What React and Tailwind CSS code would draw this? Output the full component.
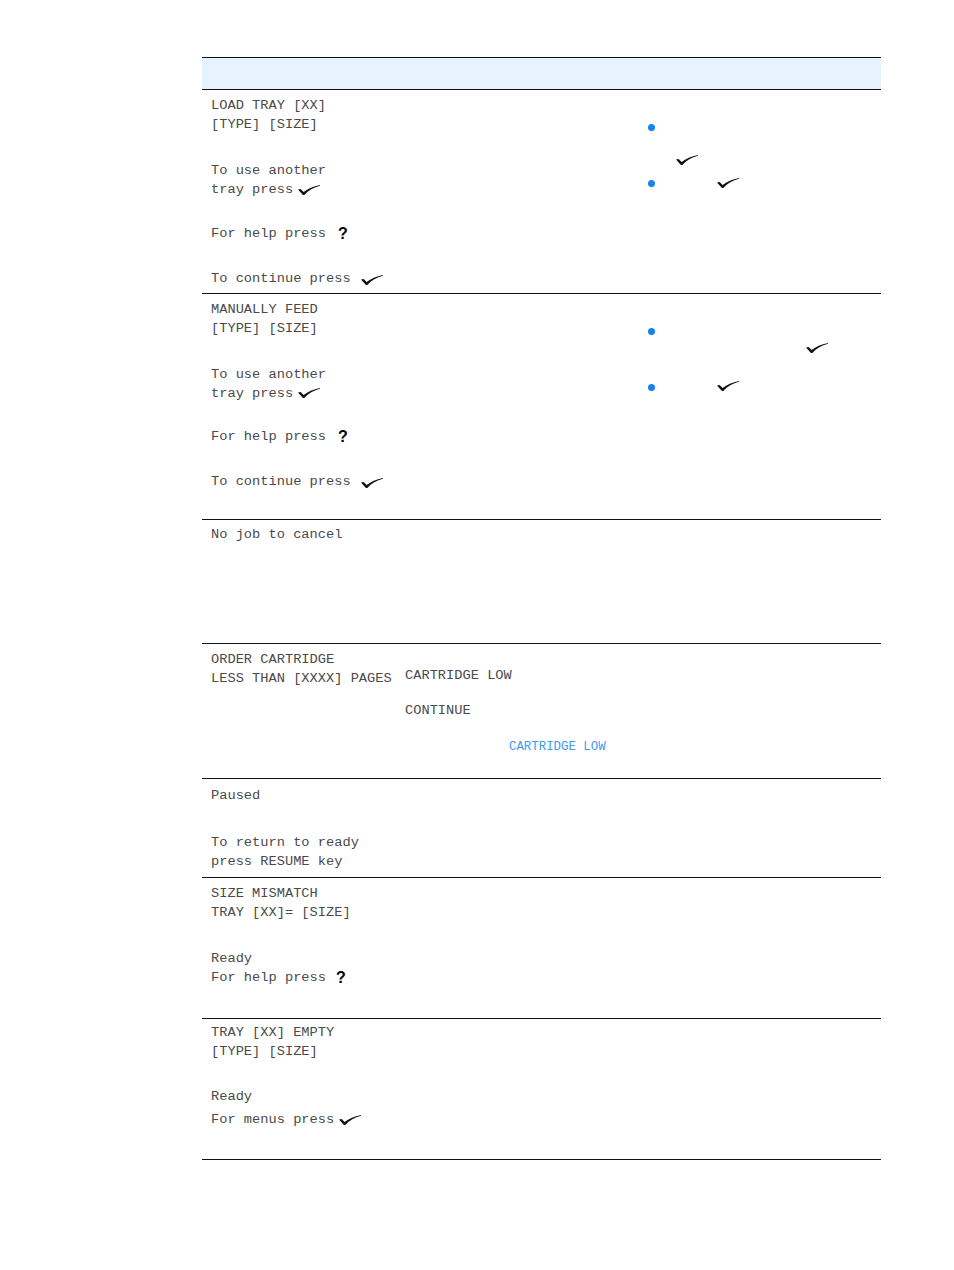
import React from 'react'

// Message table: panel text on the left, notes on the right
function Check({ className = '' }) {
  return (
    <svg viewBox="0 0 22 10" className={`w-[22px] h-[10px] shrink-0 ${className}`}>
      <path
        d="M0 4.6 L2.6 4 L5.6 6.9 C10 3.8 15 1.5 22 0 L22 0.8 C15.5 2.5 10.5 5.5 6.3 10 L4.9 10 Z"
        fill="#111"
      />
    </svg>
  )
}

function Help({ className = '' }) {
  return (
    <span className={`font-['Liberation_Sans',Arial,sans-serif] font-bold text-[16px] leading-none text-black ${className}`}>
      ?
    </span>
  )
}

function Line({ children, className = '' }) {
  return <div className={`flex items-center h-[19px] whitespace-pre ${className}`}>{children}</div>
}

function Bullet() {
  return <span className="block w-[7px] h-[7px] rounded-full bg-[#1683f5] shrink-0" />
}

function Row({ height, col1, col2, col3 }) {
  return (
    <div className={`grid grid-cols-[196px_242px_241px] border-b border-[#111] ${height}`}>
      <div className="pl-[9px]">{col1}</div>
      <div className="pl-[7px]">{col2}</div>
      <div className="pl-[8px]">{col3}</div>
    </div>
  )
}

export default function App() {
  return (
    <div className="w-[954px] h-[1270px] bg-white pt-[57px] pl-[202px] font-['Liberation_Mono',monospace] text-[13.7px] text-[#4a4a4a]">
      <div className="w-[679px]">
        <div className="h-[33px] border-y border-[#111] bg-[#e6f2fd]" />

        <Row
          height="h-[204px]"
          col1={
            <div className="pt-[7px]">
              <Line>LOAD TRAY [XX]</Line>
              <Line>[TYPE] [SIZE]</Line>
              <div className="mt-[27px]">
                <Line>To use another</Line>
                <Line>tray press<Check className="ml-[5px] -mt-[2px]" /></Line>
              </div>
              <div className="mt-[25px]">
                <Line>For help press<Help className="ml-[12px] -mt-[2px]" /></Line>
              </div>
              <div className="mt-[26px]">
                <Line>To continue press<Check className="ml-[10px]" /></Line>
              </div>
            </div>
          }
          col3={
            <div className="pt-[32px]">
              <div className="flex items-center h-[10px]"><Bullet /></div>
              <div className="flex items-center h-[10px] mt-[23px]"><Check className="ml-[28px]" /></div>
              <div className="flex items-center h-[10px] mt-[13px]"><Bullet /><Check className="ml-[62px]" /></div>
            </div>
          }
        />

        <Row
          height="h-[226px]"
          col1={
            <div className="pt-[6.5px]">
              <Line>MANUALLY FEED</Line>
              <Line>[TYPE] [SIZE]</Line>
              <div className="mt-[27px]">
                <Line>To use another</Line>
                <Line>tray press<Check className="ml-[5px] -mt-[2px]" /></Line>
              </div>
              <div className="mt-[24.5px]">
                <Line>For help press<Help className="ml-[12px] -mt-[2px]" /></Line>
              </div>
              <div className="mt-[26px]">
                <Line>To continue press<Check className="ml-[10px]" /></Line>
              </div>
            </div>
          }
          col3={
            <div className="pt-[32.5px]">
              <div className="flex items-center h-[10px]"><Bullet /></div>
              <div className="flex items-center h-[10px] mt-[6px]"><Check className="ml-[158px]" /></div>
              <div className="flex items-center h-[10px] mt-[30px]"><Bullet /><Check className="ml-[62px] -mt-[3px]" /></div>
            </div>
          }
        />

        <Row
          height="h-[124px]"
          col1={
            <div className="pt-[6px]">
              <Line>No job to cancel</Line>
            </div>
          }
        />

        <Row
          height="h-[135px]"
          col1={
            <div className="pt-[6.5px]">
              <Line>ORDER CARTRIDGE</Line>
              <Line>LESS THAN [XXXX] PAGES</Line>
            </div>
          }
          col2={
            <div className="pt-[22.5px]">
              <Line>CARTRIDGE LOW</Line>
              <Line className="mt-[16.75px]">CONTINUE</Line>
              <div className="mt-[17.5px] ml-[104px] h-[17px] flex items-center whitespace-pre text-[12.4px] text-[#3d9bf0]">
                CARTRIDGE LOW
              </div>
            </div>
          }
        />

        <Row
          height="h-[99px]"
          col1={
            <div className="pt-[8px]">
              <Line>Paused</Line>
              <div className="mt-[27.75px]">
                <Line>To return to ready</Line>
                <Line>press RESUME key</Line>
              </div>
            </div>
          }
        />

        <Row
          height="h-[141px]"
          col1={
            <div className="pt-[7px]">
              <Line>SIZE MISMATCH</Line>
              <Line>TRAY [XX]= [SIZE]</Line>
              <div className="mt-[27px]">
                <Line>Ready</Line>
                <Line>For help press<Help className="ml-[10px] -mt-[2px]" /></Line>
              </div>
            </div>
          }
        />

        <Row
          height="h-[141px]"
          col1={
            <div className="pt-[5px]">
              <Line>TRAY [XX] EMPTY</Line>
              <Line>[TYPE] [SIZE]</Line>
              <Line className="mt-[26.25px]">Ready</Line>
              <Line className="mt-[4px]">For menus press<Check className="ml-[5px] -mt-[2px]" /></Line>
            </div>
          }
        />
      </div>
    </div>
  )
}
